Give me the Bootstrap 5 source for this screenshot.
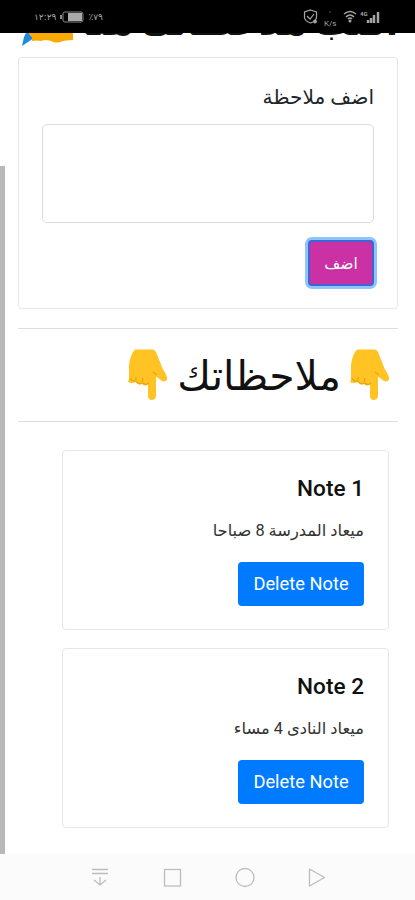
<!DOCTYPE html>
<html lang="ar" dir="rtl">
<head>
<meta charset="utf-8">
<meta name="viewport" content="width=device-width, initial-scale=1">
<title>ملاحظاتك</title>
<link href="https://cdn.jsdelivr.net/npm/bootstrap@5.3.0/dist/css/bootstrap.min.css" rel="stylesheet">
<style>
body{font-family:Roboto,"DejaVu Sans",sans-serif;color:#212529;height:900px;overflow:hidden;background:#fff}
.status-bar{height:33px;background:#000;color:#a5a5a5;padding:0 34px;flex:none;z-index:2}
.status-text{font:9px/12px "DejaVu Sans",sans-serif;letter-spacing:-.3px}
.page-area{padding:0 17px 0 18px;overflow:hidden}
.page-title{height:50px;margin:-26px 0 0;padding-left:3px;font-size:34.700px;line-height:46px;font-weight:700;color:#111;white-space:nowrap}
.title-text{height:57px}
.form-card,.note-card{border:1.500px solid #e6e6e6;border-radius:4px}
.form-card{height:252px;padding:24px 23px 0}
.form-label{font-size:20.200px;line-height:30px;height:36px;margin:0}
.note-input{height:99px;border:1px solid #dcdcdc;border-radius:5px;resize:none;margin-top:6px}
.add-btn{width:66px;height:46px;margin:17px 0 0;padding:3px 0 0 0;font-size:15.500px;color:#fff;background:#c931a5;border:2px solid #3d65d8;border-radius:4px;box-shadow:0 0 0 3px #8fc5fb}
.rule{height:1px;background:#dedede}
.first-rule{margin-top:19px}
.notes-title{height:92px;padding:0 8px 0 0;font-size:41px;color:#111;gap:9px}
.notes-title .fit{line-height:50px;padding-top:2px}
.note-list{gap:18px;padding:28px 9px 0 0}
.note-card{width:327px;height:180px;padding:24px 24px 0}
.note-title{font-size:22.600px;line-height:28px;font-weight:500;color:#111}
.note-text{font-size:16.300px;line-height:24px;color:#333;margin:16px 0 19px}
.note-btn{width:126px;height:44px;padding:0;font-size:18.300px;background:#007bff;border:0;border-radius:4px}
.nav-keys{height:46px;background:#fbfbfb;flex:none;z-index:2}
.scroll-thumb{position:absolute;left:0;top:166px;width:5px;height:688px;background:#b8b8b8}
.fit{display:inline-block;white-space:nowrap}
</style>
</head>
<body class="d-flex flex-column position-relative">
<svg width="0" height="0" class="position-absolute" aria-hidden="true"><defs><g id="hand-down"><path d="M7 .5H25q3 1 4 5l4 10q1 4 4 8l2 5q1 3-3 4q-2 0-4-2l-4-3v19q0 4-4 4.500q-4 0-4-4V35q-3 3-6 0q-4 2-6-2q-5 2-8 0Q1 31 1 28V16q1-10 6-15.500z" fill="#ffc423"/><path d="M2 29q2 4 6 3q2 4 7 2q3 3 6 0M29 26l-4-3M14 33l1-4M8 31v-3" fill="none" stroke="#e9a414" stroke-width="1.300"/></g></defs></svg>
<header class="status-bar d-flex align-items-center justify-content-between" dir="ltr">
  <div class="d-flex align-items-center gap-1 status-text"><span>١٢:٢٩</span>
    <svg width="24" height="12" viewBox="0 0 24 12"><rect x="3" y="1" width="20" height="10" rx="2" fill="none" stroke="#888"/><rect x="8" y="2" width="14" height="8" fill="#aaa"/><path d="M1 4v4" stroke="#888" stroke-width="2"/></svg>
    <span>٪٧٩</span></div>
  <svg width="78" height="22" viewBox="303 6 78 22" fill="none" stroke="#a5a5a5" stroke-width="1.200"><path d="M310.500 10l6 2v5q0 4-6 6q-6-2-6-6v-5z"/><path d="M307 16l3 3l4-5"/><circle cx="315" cy="21.500" r="1.300" fill="#a5a5a5"/><circle cx="330" cy="12" r=".6" fill="#a5a5a5" stroke="none"/><text x="324" y="26" font-size="8" font-family="Roboto" fill="#a5a5a5" stroke="none">K/s</text><path d="M344 14q6-5 12 0M346 17q4-4 8 0M348 19q2-2 4 0" stroke-width="1.600"/><circle cx="350" cy="21" r="1.500" fill="#a5a5a5" stroke="none"/><text x="360" y="16" font-size="6" font-weight="700" font-family="Roboto" fill="#a5a5a5" stroke="none">4G</text><path d="M368 23v-3M371 23v-5M374 23v-8M378 23v-11" stroke-width="2.500"/></svg>
</header>
<main class="page-area flex-grow-1">
  <h1 class="page-title d-flex align-items-end justify-content-between"><span class="fit title-text">اكتب ملاحظاتك هنا</span>
    <svg class="flex-shrink-0" width="52" height="44" viewBox="21 13 52 44"><path d="M22 46l2-9q4-9 14-20l8 8q-10 13-24 21" fill="#1e88e5"/><path d="M28 33q2 3 4 4v4q5-1 9 0q5-2 10 0q6 3 12 0q5-1 10-1V20H40z" fill="#fba905"/></svg></h1>
  <section class="card form-card">
    <label class="form-label" for="note"><span class="fit">اضف ملاحظة</span></label>
    <textarea class="form-control note-input" id="note"></textarea>
    <button class="btn add-btn" type="button">اضف</button>
  </section>
  <div class="rule first-rule"></div>
  <h2 class="notes-title d-flex align-items-center mb-0 fw-normal">
    <svg width="40" height="52" viewBox="0 0 40 52"><use href="#hand-down"/></svg>
    <span class="fit">ملاحظاتك</span>
    <svg width="40" height="52" viewBox="0 0 40 52"><use href="#hand-down"/></svg>
  </h2>
  <div class="rule"></div>
  <section class="note-list d-flex flex-column">
    <article class="card note-card"><h5 class="note-title mb-0">Note 1</h5><p class="note-text"><span class="fit">ميعاد المدرسة 8 صباحا</span></p><button class="btn btn-primary note-btn" type="button">Delete Note</button></article>
    <article class="card note-card"><h5 class="note-title mb-0">Note 2</h5><p class="note-text"><span class="fit">ميعاد النادى 4 مساء</span></p><button class="btn btn-primary note-btn" type="button">Delete Note</button></article>
  </section>
</main>
<div class="scroll-thumb"></div>
<footer class="nav-keys d-flex align-items-center" dir="ltr"><svg width="415" height="46" viewBox="0 854 415 46" fill="none" stroke="#bdbdbd" stroke-width="1.300"><path d="M92 869.500h16M92 873.500h16M100 877v8M94 880l6 5l6-5"/><rect x="164.500" y="869.500" width="16" height="16.500"/><circle cx="245" cy="877.500" r="9"/><path d="M309.500 869v17l15-8.500z" stroke-linejoin="round"/></svg></footer>
<script src="https://cdn.jsdelivr.net/npm/bootstrap@5.3.0/dist/js/bootstrap.bundle.min.js"></script>
</body>
</html>
